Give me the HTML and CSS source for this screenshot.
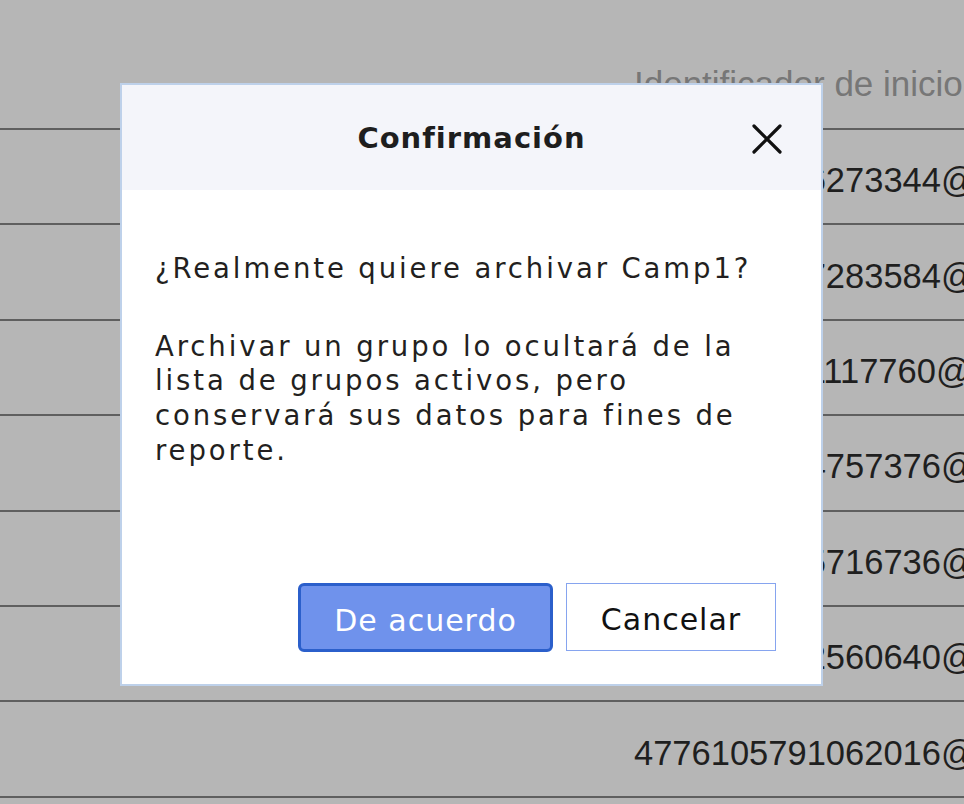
FILE: index.html
```html
<!DOCTYPE html>
<html lang="es">
<head>
<meta charset="utf-8">
<title>Confirmación</title>
<link rel="stylesheet" href="styles.css">
</head>
<body>
<div class="table">
  <div class="row head"><span class="cell">Identificador de inicio</span></div>
  <div class="row"><span class="cell">6438109456273344@</span></div>
  <div class="row"><span class="cell">5301874627283584@</span></div>
  <div class="row"><span class="cell">6019283741117760@</span></div>
  <div class="row"><span class="cell">5529301874757376@</span></div>
  <div class="row"><span class="cell">4836190275716736@</span></div>
  <div class="row"><span class="cell">5172839402560640@</span></div>
  <div class="row"><span class="cell">4776105791062016@</span></div>
</div>

<div class="dialog" role="dialog">
  <div class="dialog-head">
    <h2 class="dialog-title">Confirmación</h2>
    <button class="close" aria-label="Cerrar">
      <svg width="30" height="30" viewBox="0 0 30 30"><path d="M2 2 L28 28 M28 2 L2 28" stroke="#111" stroke-width="3.2" stroke-linecap="round"/></svg>
    </button>
  </div>
  <div class="dialog-body">
    <p class="msg first">¿Realmente quiere archivar Camp1?</p>
    <p class="msg">Archivar un grupo lo ocultará de la lista de grupos activos, pero conservará sus datos para fines de reporte.</p>
  </div>
  <div class="dialog-foot">
    <button class="btn primary">De acuerdo</button>
    <button class="btn secondary">Cancelar</button>
  </div>
</div>
</body>
</html>
```

FILE: styles.css
```css
html, body {
  margin: 0;
  padding: 0;
}
body {
  width: 964px;
  height: 804px;
  overflow: hidden;
  background: #b6b6b6;
  position: relative;
  font-family: "Liberation Sans", Arial, sans-serif;
}
.table {
  display: flex;
  flex-direction: column;
}
.row {
  box-sizing: border-box;
  height: 95.4px;
  border-bottom: 2px solid #5f5f5f;
  padding-left: 634px;
  display: flex;
  align-items: center;
  font-size: 34.5px;
  color: #1f1f1f;
  white-space: nowrap;
  padding-top: 8px;
}
.row.head {
  height: 130px;
  align-items: flex-start;
  padding-top: 64px;
  font-size: 35px;
  color: #777;
}
.dialog {
  position: absolute;
  left: 120px;
  top: 83px;
  width: 703px;
  height: 603px;
  box-sizing: border-box;
  border: 2px solid #bed1ea;
  background: #fff;
  display: flex;
  flex-direction: column;
  font-family: "DejaVu Sans", "Liberation Sans", sans-serif;
  color: #231f20;
}
.dialog-head {
  height: 105px;
  background: #f4f5fa;
  display: flex;
  align-items: center;
  justify-content: center;
  position: relative;
  flex-shrink: 0;
}
.dialog-title {
  margin: 0;
  font-size: 29px;
  font-weight: bold;
  letter-spacing: 1px;
  color: #1e1e1e;
  padding-top: 0;
}
.close {
  position: absolute;
  right: 39px;
  top: 39px;
  width: 30px;
  height: 30px;
  padding: 0;
  border: 0;
  background: transparent;
  display: flex;
}
.dialog-body {
  padding: 61px 35px 0 33px;
}
.msg {
  margin: 0;
  font-size: 27.5px;
  line-height: 34.7px;
  letter-spacing: 2.9px;
}
.msg.first {
  margin-bottom: 43px;
}
.dialog-foot {
  margin-top: auto;
  display: flex;
  justify-content: flex-end;
  gap: 13px;
  padding: 0 45px 32px 0;
}
.btn {
  box-sizing: border-box;
  height: 69px;
  font-family: "DejaVu Sans", "Liberation Sans", sans-serif;
  font-size: 30px;
  letter-spacing: 1px;
  padding: 5px 0 0;
}
.btn.primary {
  width: 255px;
  background: #6f92ec;
  border: 3px solid #2b5fcb;
  border-radius: 6px;
  color: #fff;
}
.btn.secondary {
  width: 210px;
  height: 68px;
  background: #fff;
  border: 1px solid #86a4ef;
  border-radius: 0;
  color: #111;
}
```
